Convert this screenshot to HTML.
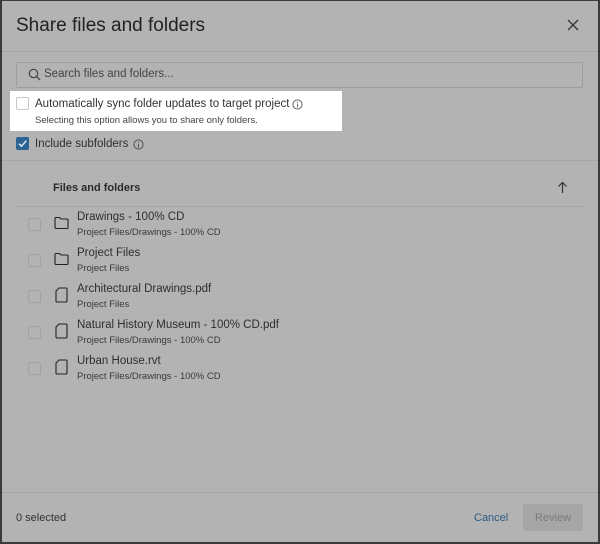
<!DOCTYPE html>
<html><head><meta charset="utf-8"><style>
*{margin:0;padding:0;box-sizing:border-box}
body{width:600px;height:544px;background:#b3b3b3;font-family:"Liberation Sans",sans-serif;color:#2a2a2a;position:relative;overflow:hidden}
.frame{position:absolute;left:0;top:0;width:600px;height:544px;border:2px solid #3a3a3a;border-top-width:1px;border-right-width:2px}
.abs{position:absolute;white-space:nowrap}
.line{position:absolute;height:1px;background:#a6a6a6}
.cb{position:absolute;width:13px;height:13px;border:1px solid #a2a2a2;border-radius:2px}
.name{font-size:11.5px;color:#2e2e2e}
.path{font-size:9.5px;color:#3a3a3a}
.rl{position:absolute;height:1px;left:16px;width:568px;background:#afafaf}
</style></head><body>
<div class="frame"></div>
<div class="abs" style="left:16px;top:15px;font-size:19px;color:#222">Share files and folders</div>
<svg class="abs" style="left:567px;top:19px" width="12" height="12"><path d="M1 1L11 11M11 1L1 11" stroke="#333" stroke-width="1.3"/></svg>
<div class="line" style="left:2px;right:2px;top:51px"></div>
<div class="abs" style="left:16px;top:62px;width:567px;height:26px;border:1px solid #9d9d9d;border-radius:2px"></div>
<svg class="abs" style="left:28px;top:68px" width="13" height="13"><circle cx="5.5" cy="5.5" r="4.2" stroke="#444" stroke-width="1.2" fill="none"/><path d="M8.6 8.6L12 12" stroke="#444" stroke-width="1.3"/></svg>
<div class="abs" style="left:44px;top:68px;font-size:11.5px;color:#444">Search files and folders...</div>
<div class="abs" style="left:10px;top:91px;width:332px;height:40px;background:#fff"></div>
<div class="abs" style="left:16px;top:97px;width:13px;height:13px;border:1px solid #c8c8c8;border-radius:2px"></div>
<div class="abs" style="left:35px;top:98px;font-size:11.5px;color:#333">Automatically sync folder updates to target project</div>
<svg class="abs" style="left:292px;top:99px" width="11" height="11"><circle cx="5.5" cy="5.5" r="4.6" stroke="#666" fill="none"/><path d="M5.5 4.8V8.5" stroke="#666"/><circle cx="5.5" cy="3.2" r=".6" fill="#666"/></svg>
<div class="abs" style="left:35px;top:115px;font-size:9.5px;color:#444">Selecting this option allows you to share only folders.</div>
<div class="abs" style="left:16px;top:137px;width:13px;height:13px;background:#2b6493;border-radius:2px"></div>
<svg class="abs" style="left:16px;top:137px" width="13" height="13"><path d="M3 6.8L5.5 9.2L10.3 3.8" stroke="#dbe6ef" stroke-width="1.5" fill="none"/></svg>
<div class="abs" style="left:35px;top:138px;font-size:11.5px;color:#2e2e2e">Include subfolders</div>
<svg class="abs" style="left:133px;top:139px" width="11" height="11"><circle cx="5.5" cy="5.5" r="4.6" stroke="#555" fill="none"/><path d="M5.5 4.8V8.5" stroke="#555"/><circle cx="5.5" cy="3.2" r=".6" fill="#555"/></svg>
<div class="line" style="left:2px;right:2px;top:160px"></div>
<div class="abs" style="left:53px;top:182px;font-size:11px;font-weight:bold;color:#2a2a2a">Files and folders</div>
<svg class="abs" style="left:557px;top:181px" width="11" height="13"><path d="M5.5 12V1.5M1.5 5.5L5.5 1.5L9.5 5.5" stroke="#333" stroke-width="1.2" fill="none"/></svg>
<div class="line" style="left:16px;width:568px;top:206px"></div>

<div class="cb" style="left:28px;top:218px"></div>
<svg class="abs" style="left:54px;top:216px" width="15" height="14"><path d="M1 2.5Q1 1.5 2 1.5H5.5L7 3H13Q14 3 14 4V11.5Q14 12.5 13 12.5H2Q1 12.5 1 11.5Z" stroke="#222" stroke-width="1.1" fill="none"/></svg>
<div class="abs name" style="left:77px;top:211px">Drawings - 100% CD</div>
<div class="abs path" style="left:77px;top:227px">Project Files/Drawings - 100% CD</div>
<div class="rl" style="top:242px"></div>

<div class="cb" style="left:28px;top:254px"></div>
<svg class="abs" style="left:54px;top:252px" width="15" height="14"><path d="M1 2.5Q1 1.5 2 1.5H5.5L7 3H13Q14 3 14 4V11.5Q14 12.5 13 12.5H2Q1 12.5 1 11.5Z" stroke="#222" stroke-width="1.1" fill="none"/></svg>
<div class="abs name" style="left:77px;top:247px">Project Files</div>
<div class="abs path" style="left:77px;top:263px">Project Files</div>
<div class="rl" style="top:278px"></div>

<div class="cb" style="left:28px;top:290px"></div>
<svg class="abs" style="left:55px;top:287px" width="13" height="16"><path d="M4 1H11Q12 1 12 2V14Q12 15 11 15H2Q1 15 1 14V4Z" stroke="#222" stroke-width="1.1" fill="none"/></svg>
<div class="abs name" style="left:77px;top:283px">Architectural Drawings.pdf</div>
<div class="abs path" style="left:77px;top:299px">Project Files</div>
<div class="rl" style="top:314px"></div>

<div class="cb" style="left:28px;top:326px"></div>
<svg class="abs" style="left:55px;top:323px" width="13" height="16"><path d="M4 1H11Q12 1 12 2V14Q12 15 11 15H2Q1 15 1 14V4Z" stroke="#222" stroke-width="1.1" fill="none"/></svg>
<div class="abs name" style="left:77px;top:319px">Natural History Museum - 100% CD.pdf</div>
<div class="abs path" style="left:77px;top:335px">Project Files/Drawings - 100% CD</div>
<div class="rl" style="top:350px"></div>

<div class="cb" style="left:28px;top:362px"></div>
<svg class="abs" style="left:55px;top:359px" width="13" height="16"><path d="M4 1H11Q12 1 12 2V14Q12 15 11 15H2Q1 15 1 14V4Z" stroke="#222" stroke-width="1.1" fill="none"/></svg>
<div class="abs name" style="left:77px;top:355px">Urban House.rvt</div>
<div class="abs path" style="left:77px;top:371px">Project Files/Drawings - 100% CD</div>
<div class="rl" style="top:386px"></div>

<div class="line" style="left:2px;right:2px;top:492px"></div>
<div class="abs" style="left:16px;top:512px;font-size:11px;color:#333">0 selected</div>
<div class="abs" style="left:474px;top:512px;font-size:11px;color:#2c5a85">Cancel</div>
<div class="abs" style="left:523px;top:504px;width:60px;height:27px;background:#a6a6a6;border-radius:2px;font-size:11px;color:#7a7a7a;text-align:center;line-height:28px">Review</div>
</body></html>
